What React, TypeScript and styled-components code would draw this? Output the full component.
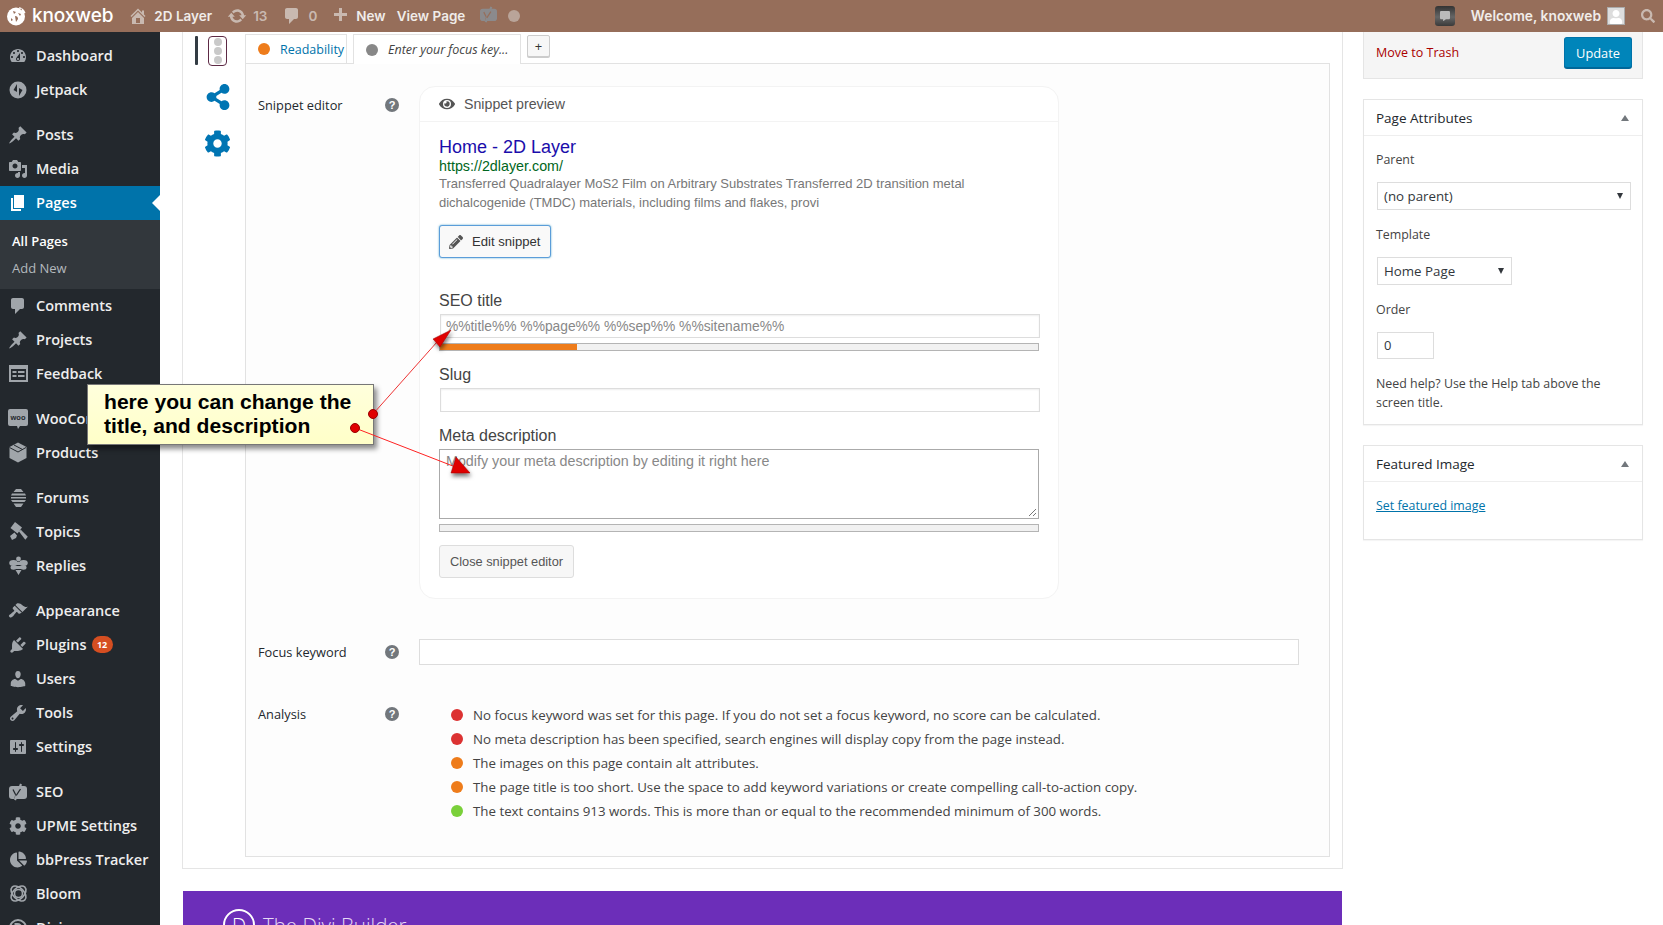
import React from "react";
import styled, { createGlobalStyle } from "styled-components";
import { FaCommentAlt, FaCog, FaChartPie, FaSearch, FaEye, FaPencilAlt, FaShareAlt, FaUser } from "react-icons/fa";

const Global = createGlobalStyle`
  html, body { margin: 0; padding: 0; height: 925px; overflow: hidden; background: #fff; }
  * { box-sizing: border-box; }
  #root { height: 925px; }
`;

const Page = styled.div`
  position: relative; width: 1663px; height: 925px; overflow: hidden;
  font-family: "Open Sans", sans-serif; color: #444;
`;

/* ---------- top bar ---------- */
const TopBar = styled.header`
  height: 32px; background: #966e5a; display: flex; align-items: center; justify-content: space-between;
  color: #eee; font-family: Inter, "Open Sans", sans-serif; font-weight: 600; font-size: 13.5px;
`;
const BarGroup = styled.div`display: flex; align-items: center;`;
const BarItem = styled.span<{ $ml: number; $dim?: boolean }>`
  display: inline-flex; align-items: center; margin-left: ${p => p.$ml}px; white-space: nowrap;
  color: ${p => (p.$dim ? "#c9b9b0" : "#f0ece9")};
  svg { display: block; }
`;
const Brand = styled.span`
  margin-left: 6px; font-size: 19px; font-weight: 500; color: #fff; letter-spacing: -0.1px; line-height: 32px;
`;
const Welcome = styled.span`font-size: 13.8px;`;
const BarYoast = styled.span`display: block; margin-left: 15px; color: #8b8a8c;`;
const NoteBox = styled.span`
  width: 20px; height: 20px; border-radius: 3px; background: linear-gradient(#333, #666 55%, #3a3a3a);
  display: flex; align-items: center; justify-content: center; color: #bbb;
`;
const Avatar = styled.span`
  width: 18px; height: 18px; background: #ddd; display: flex; align-items: flex-end; justify-content: center;
  border: 1px solid #aaa; color: #fff; overflow: hidden;
`;

/* ---------- shell ---------- */
const Shell = styled.div`display: flex; height: 893px;`;
const Sidebar = styled.nav`
  width: 160px; flex: none; background: #23282d; padding-top: 7px; overflow: hidden;
`;
const MenuItem = styled.div<{ $gap?: boolean; $active?: boolean }>`
  position: relative; height: 34px; display: flex; align-items: center; margin-top: ${p => (p.$gap ? 11 : 0)}px;
  padding-bottom: 1px;
  background: ${p => (p.$active ? "#0073aa" : "transparent")};
  color: ${p => (p.$active ? "#fff" : "#eee")}; font-size: 14.5px; font-weight: 600; white-space: nowrap;
`;
const MenuIcon = styled.span<{ $active?: boolean }>`
  width: 36px; flex: none; display: flex; justify-content: center;
  color: ${p => (p.$active ? "#fff" : "#a0a5aa")};
  svg { display: block; }
`;
const ActiveNotch = styled.span`
  position: absolute; right: 0; top: 9px; border: 8px solid transparent; border-right-color: #fff; border-left-width: 0;
`;
const Badge = styled.span`
  margin-left: 5px; width: 21px; height: 17px; border-radius: 9px; background: #d54e21; color: #fff;
  font-size: 9px; font-weight: 700; display: flex; align-items: center; justify-content: center;
`;
const Submenu = styled.div`
  height: 69px; background: #32373c; padding-top: 8px;
`;
const SubItem = styled.div<{ $on?: boolean }>`
  height: 26px; line-height: 26px; padding-left: 12px; font-size: 13px; margin-top: ${p => (p.$on ? 0 : 1)}px;
  color: ${p => (p.$on ? "#fff" : "#b4b9be")}; font-weight: ${p => (p.$on ? 600 : 400)};
`;

const Main = styled.main`
  flex: 1; display: flex; padding-left: 22px; align-items: flex-start;
`;

/* ---------- central meta box ---------- */
const MetaColumn = styled.div`width: 1161px; flex: none;`;
const MetaBox = styled.section`
  height: 837px; border: 1px solid #e5e5e5; border-top: 0; display: flex; background: #fff;
`;
const SideTabs = styled.div`
  width: 62px; flex: none; position: relative; padding-top: 4px; display: flex; flex-direction: column; align-items: center;
`;
const TrafficWrap = styled.div`
  width: 32px; height: 29px; display: flex; justify-content: space-between; margin-left: -6px;
`;
const TrafficBar = styled.span`width: 3px; height: 29px; background: #333c44; border-radius: 1px;`;
const TrafficLight = styled.span`
  width: 19px; height: 30px; border: 1px solid #5d2a45; border-radius: 4px; display: flex; flex-direction: column;
  align-items: center; justify-content: space-evenly; background: #fff;
`;
const TrafficDot = styled.span`width: 8px; height: 8px; border-radius: 50%; background: #c9c9c9;`;
const SideIcon = styled.span<{ $mt: number }>`
  margin-top: ${p => p.$mt}px; margin-left: 7px; color: #0075b3; display: block; svg { display: block; }
`;
const TabColumn = styled.div`flex: 1; padding-top: 2px; padding-right: 12px;`;
const TabRow = styled.div`display: flex; align-items: flex-start; height: 29px; position: relative; z-index: 1;`;
const Tab = styled.div<{ $active?: boolean; $w: number; $ml: number }>`
  width: ${p => p.$w}px; margin-left: ${p => p.$ml}px; height: 30px;
  border: 1px solid #e2e2e2; border-bottom: ${p => (p.$active ? "0" : "1px solid #e2e2e2")};
  background: #fff; display: flex; align-items: center; padding-left: 12px; font-size: 13px;
`;
const TabDot = styled.span<{ $c: string }>`
  width: 12px; height: 12px; border-radius: 50%; background: ${p => p.$c}; flex: none; margin-right: 10px;
`;
const TabLabel = styled.span<{ $focus?: boolean }>`
  color: ${p => (p.$focus ? "#444" : "#0073aa")}; font-style: ${p => (p.$focus ? "italic" : "normal")}; font-size: 12.5px; white-space: nowrap;
`;
const AddTab = styled.div`
  margin: 1px 0 0 6px; width: 23px; height: 22px; border: 1px solid #ccc; border-radius: 2px; box-shadow: 0 1px 0 #ccc;
  display: flex; align-items: center; justify-content: center; font-size: 13px; color: #333; background: #f7f7f7;
`;
const Panel = styled.div`
  height: 794px; border: 1px solid #e2e2e2; background: #fdfdfd; padding: 22px 0 0 12px;
`;
const FormRow = styled.div<{ $mt?: number }>`
  display: flex; align-items: flex-start; margin-top: ${p => p.$mt ?? 0}px;
`;
const FormLabel = styled.div<{ $top: number }>`
  width: 161px; flex: none; display: flex; justify-content: space-between; padding: ${p => p.$top}px 20px 0 0;
  font-size: 12.8px; line-height: 18px; color: #23282d;
`;
const Help = styled.span`
  width: 14px; height: 14px; margin-top: 2px; border-radius: 50%; background: #72777c; color: #fff;
  font: 700 11px/14px "Liberation Sans", sans-serif; text-align: center;
`;

/* ---------- snippet ---------- */
const Snippet = styled.div`
  width: 640px; height: 513px; border: 1px solid #f3f3f3; border-radius: 16px; background: #fff;
  font-family: "Liberation Sans", sans-serif;
`;
const SnippetHead = styled.div`
  height: 35px; border-bottom: 1px solid #f3f3f3; display: flex; align-items: center; padding-left: 19px;
  color: #555; font-size: 14.2px; gap: 9px;
`;
const SnippetBody = styled.div`padding: 15px 0 0 19px;`;
const GTitle = styled.div`font-size: 18px; line-height: 20px; color: #1a0dab;`;
const GUrl = styled.div`font-size: 14.3px; line-height: 18px; color: #006621;`;
const GDesc = styled.div`font-size: 13px; line-height: 19px; color: #777; margin-top: -1px; width: 540px;`;
const EditBtn = styled.div`
  width: 112px; height: 33px; margin-top: 13px; border: 1px solid #5b9dd9; border-radius: 3px; background: #f9f9f9;
  box-shadow: 0 0 2px rgba(30,140,190,.8); display: flex; align-items: center; padding-left: 9px; gap: 9px;
  font-size: 13.1px; color: #333;
`;
const FieldLabel = styled.div<{ $mt: number }>`
  font-size: 16px; line-height: 20px; color: #444; margin-top: ${p => p.$mt}px;
`;
const Field = styled.div<{ $mt: number }>`
  width: 600px; margin-left: 1px; height: 24px; margin-top: ${p => p.$mt}px; border: 1px solid #ddd; background: #fff; padding: 1px 0 0 5px;
  font-size: 13.8px; line-height: 21px; color: #888; box-shadow: inset 0 1px 2px rgba(0,0,0,.07);
`;
const TextArea = styled.div`
  position: relative; width: 600px; height: 70px; margin-top: 3px; border: 1px solid #aaa; background: #fff; padding: 2px 6px;
  font-size: 14.3px; line-height: 18px; color: #888;
`;
const Grip = styled.svg`position: absolute; right: 1px; bottom: 1px;`;
const Progress = styled.div<{ $mt: number }>`
  width: 600px; height: 8px; margin-top: ${p => p.$mt}px; border: 1px solid #b4b4b4; background: #f1f1f1;
`;
const ProgressFill = styled.div`height: 100%; background: #ee7c1b;`;
const CloseBtn = styled.div`
  width: 135px; height: 33px; margin-top: 13px; border: 1px solid #ddd; border-radius: 3px; background: #f7f7f7;
  display: flex; align-items: center; justify-content: center; font-size: 12.8px; color: #555;
`;
const KeywordInput = styled.div`
  width: 880px; height: 26px; border: 1px solid #ddd; background: #fff;
`;
const Results = styled.ul`
  list-style: none; margin: 0; padding: 0 0 0 32px; font-size: 13.3px; color: #444;
`;
const Result = styled.li`
  height: 24px; display: flex; align-items: center; white-space: nowrap;
`;
const ResultDot = styled.span<{ $c: string }>`
  width: 12px; height: 12px; border-radius: 50%; background: ${p => p.$c}; margin-right: 10px; flex: none;
`;
const Divi = styled.div`
  margin: 22px 1px 0; height: 60px; background: #6c2eb9; padding: 18px 0 0 40px; display: flex; gap: 8px; color: #e6d9f5;
  font-size: 20.5px; font-weight: 300; line-height: 32px;
`;
const DiviMark = styled.span`
  width: 32px; height: 32px; border: 2px solid #fff; border-radius: 50%; color: #fff; text-align: center; font-size: 20px; line-height: 30px;
`;

/* ---------- right column ---------- */
const RightColumn = styled.aside`width: 280px; flex: none; margin-left: 20px;`;
const PublishBar = styled.div`
  height: 47px; background: #f5f5f5; border: 1px solid #e5e5e5; border-top: 0; display: flex; align-items: flex-start;
  justify-content: space-between; padding: 5px 10px 0 12px; font-size: 12.5px;
`;
const Trash = styled.span`color: #a00; margin-top: 7px;`;
const UpdateBtn = styled.span`
  width: 68px; height: 31px; background: #0085ba; border: 1px solid #0073aa; border-bottom-color: #006799; border-radius: 3px;
  color: #fff; display: flex; align-items: center; justify-content: center; box-shadow: 0 1px 0 #006799; font-size: 12.8px;
`;
const Box = styled.section<{ $h: number; $mt: number }>`
  height: ${p => p.$h}px; margin-top: ${p => p.$mt}px; background: #fff; border: 1px solid #e5e5e5; box-shadow: 0 1px 1px rgba(0,0,0,.04);
`;
const BoxHead = styled.div`
  height: 36px; border-bottom: 1px solid #eee; display: flex; align-items: center; justify-content: space-between;
  padding: 0 13px 0 12px; font-size: 13.5px; color: #23282d;
`;
const Collapse = styled.span`
  border: 4px solid transparent; border-bottom: 6px solid #72777c; border-top: 0; width: 0; height: 0;
`;
const BoxBody = styled.div`padding: 0 12px; font-size: 12.4px;`;
const AttrLabel = styled.div<{ $mt: number }>`
  margin-top: ${p => p.$mt}px; line-height: 18px; color: #444;
`;
const SelectBox = styled.div<{ $w: number; $mt: number }>`
  width: ${p => p.$w}px; height: 28px; margin: ${p => p.$mt}px 0 0 1px; border: 1px solid #ddd; display: flex; align-items: center;
  justify-content: space-between; padding: 0 7px 0 6px; color: #32373c; font-size: 13.3px;
`;
const SelectCaret = styled.span`border: 3.5px solid transparent; border-top: 6px solid #32373c; border-bottom: 0;`;
const OrderInput = styled.div`
  width: 57px; height: 27px; margin: 13px 0 0 1px; border: 1px solid #ddd; padding: 0 6px; line-height: 25px; color: #32373c; font-size: 13px;
`;
const HelpText = styled.p`margin: 15px 0 0; line-height: 19px; color: #444; width: 250px;`;
const BoxLink = styled.span`
  display: block; margin-top: 15px; color: #0073aa; text-decoration: underline; line-height: 18px;
`;

/* ---------- annotation overlay ---------- */
const Callout = styled.div`
  position: absolute; left: 87px; top: 384px; width: 287px; height: 61px; border: 1px solid #777;
  background: linear-gradient(#ffffdc, #ffffc8); box-shadow: 3px 4px 5px rgba(0,0,0,.45);
  padding: 5px 0 0 16px; font: 700 21.1px/24px "Liberation Sans", sans-serif; color: #000;
`;
const Arrows = styled.svg`position: absolute; inset: 0; pointer-events: none;`;

/* ---------- hand-drawn icons ---------- */
const Dash = ({ d, size = 20 }: { d: string; size?: number }) => (
  <svg width={size} height={size} viewBox="0 0 20 20" fill="currentColor"><path d={d} /></svg>
);
const D = {
  dashboard: "M3.76 16h12.48c1.1-1.37 1.76-3.11 1.76-5 0-4.42-3.58-8-8-8s-8 3.58-8 8c0 1.89.66 3.63 1.76 5zM10 4c.55 0 1 .45 1 1s-.45 1-1 1-1-.45-1-1 .45-1 1-1zM6 6c.55 0 1 .45 1 1s-.45 1-1 1-1-.45-1-1 .45-1 1-1zm8 0c.55 0 1 .45 1 1s-.45 1-1 1-1-.45-1-1 .45-1 1-1zm-5.37 5.55L12 7v6c0 1.1-.9 2-2 2s-2-.9-2-2c0-.57.24-1.08.63-1.45zM4 10c.55 0 1 .45 1 1s-.45 1-1 1-1-.45-1-1 .45-1 1-1zm12 0c.55 0 1 .45 1 1s-.45 1-1 1-1-.45-1-1 .45-1 1-1zm-5 3c0-.55-.45-1-1-1s-1 .45-1 1 .45 1 1 1 1-.45 1-1z",
  pin: "M10.44 3.02l1.82-1.82 6.36 6.35-1.83 1.82c-1.05-.68-2.48-.57-3.41.36l-.75.75c-.92.93-1.04 2.35-.35 3.41l-1.83 1.82-2.41-2.41-2.8 2.79c-.42.42-3.38 2.71-3.8 2.29s1.86-3.39 2.28-3.81l2.79-2.79L4.1 9.36l1.83-1.82c1.05.69 2.48.57 3.4-.36l.75-.75c.93-.92 1.05-2.35.36-3.41z",
  media: "M13 11V4c0-.55-.45-1-1-1h-1.67L9 1H5L3.67 3H2c-.55 0-1 .45-1 1v7c0 .55.45 1 1 1h10c.55 0 1-.45 1-1zM7 4.5c1.38 0 2.5 1.12 2.5 2.5S8.38 9.5 7 9.5 4.5 8.38 4.5 7 5.62 4.5 7 4.5zM14 6h5v10.5c0 1.38-1.12 2.5-2.5 2.5S14 17.88 14 16.5s1.12-2.5 2.5-2.5c.17 0 .34.02.5.05V9h-3V6zm-4 8.05V13h2v3.5c0 1.38-1.12 2.5-2.5 2.5S7 17.88 7 16.5 8.12 14 9.5 14c.17 0 .34.02.5.05z",
  page: "M6 15V2h10v13H6zm-1 1h8v2H3V5h2v11z",
  comment: "M5 2h9c1.1 0 2 .9 2 2v7c0 1.1-.9 2-2 2h-2l-5 5v-5H5c-1.1 0-2-.9-2-2V4c0-1.1.9-2 2-2z",
  users: "M10 9.25c-2.27 0-2.73-3.44-2.73-3.44C7 4.02 7.82 2 9.97 2c2.16 0 2.98 2.02 2.71 3.81 0 0-.41 3.44-2.68 3.44zm0 2.57L12.72 10c2.39 0 4.52 2.33 4.52 4.53v2.49s-3.65 1.13-7.24 1.13c-3.65 0-7.24-1.13-7.24-1.13v-2.49c0-2.25 1.94-4.48 4.47-4.48z",
  tools: "M16.68 9.77c-1.34 1.34-3.3 1.67-4.95.99l-5.41 6.52c-.99.99-2.59.99-3.58 0s-.99-2.59 0-3.57l6.52-5.42c-.68-1.65-.35-3.61.99-4.95 1.28-1.28 3.12-1.62 4.72-1.06l-2.89 2.89 2.82 2.82 2.86-2.87c.53 1.58.18 3.39-1.08 4.67zM3.81 16.21c.4.39 1.04.39 1.43 0 .4-.4.4-1.04 0-1.43-.39-.4-1.03-.4-1.43 0-.39.39-.39 1.03 0 1.43z",
  appearance: "M14.48 11.06L7.41 3.99l1.5-1.5c.5-.56 2.3-.47 3.51.32 1.21.8 1.43 1.28 2.91 2.1 1.18.64 2.45 1.26 4.45.85zm-.71.71L6.7 4.7 4.93 6.47c-.39.39-.39 1.02 0 1.41l1.06 1.06c.39.39.39 1.03 0 1.42-.6.6-1.43 1.11-2.21 1.69-.35.26-.7.53-1.01.84C1.43 13.23.4 14.91 1.09 15.6l.71.71c.69.69 2.37-.34 3.72-1.68.31-.31.58-.66.84-1.01.58-.78 1.09-1.61 1.69-2.21.39-.39 1.03-.39 1.42 0l1.06 1.06c.39.39 1.02.39 1.41 0z",
  plugins: "M13.11 4.36L9.87 7.6 8 5.73l3.24-3.24c.35-.34 1.05-.2 1.56.32.52.51.66 1.21.31 1.55zm-8 1.77l.91-1.12 9.01 9.01-1.19.84c-.71.71-2.63 1.16-3.82 1.16H6.14L4.9 17.26c-.59.59-1.54.59-2.12 0-.59-.58-.59-1.53 0-2.12l1.24-1.24v-3.88c0-1.13.4-3.19 1.09-3.89zm7.26 3.97l3.24-3.24c.34-.35 1.04-.21 1.55.31.52.51.66 1.21.31 1.55l-3.24 3.25z",
  settings: "M18 16V4c0-.55-.45-1-1-1H3c-.55 0-1 .45-1 1v12c0 .55.45 1 1 1h14c.55 0 1-.45 1-1zM8 11h1c.55 0 1 .45 1 1s-.45 1-1 1H8v1.5c0 .28-.22.5-.5.5s-.5-.22-.5-.5V13H6c-.55 0-1-.45-1-1s.45-1 1-1h1V5.5c0-.28.22-.5.5-.5s.5.22.5.5V11zm5-2h-1c-.55 0-1-.45-1-1s.45-1 1-1h1V5.5c0-.28.22-.5.5-.5s.5.22.5.5V7h1c.55 0 1 .45 1 1s-.45 1-1 1h-1v5.5c0 .28-.22.5-.5.5s-.5-.22-.5-.5V9z",
  home: "M16 8.5l1.53 1.53-1.06 1.06L10 4.62l-6.47 6.47-1.06-1.06L10 2.5l4 4v-2h2v4zm-6-2.46l6 5.99V18H4v-5.97zM12 17v-5H8v5h4z",
  update: "M10.2 3.28c3.53 0 6.43 2.61 6.92 6h2.08l-3.5 4-3.5-4h2.32c-.45-1.97-2.21-3.45-4.32-3.45-1.45 0-2.73.71-3.54 1.78L4.95 5.66C6.23 4.2 8.11 3.28 10.2 3.28zm-.4 13.44c-3.52 0-6.43-2.61-6.92-6H.8l3.5-4c1.17 1.33 2.33 2.67 3.5 4H5.48c.45 1.97 2.21 3.45 4.32 3.45 1.45 0 2.73-.71 3.54-1.78l1.71 1.95c-1.28 1.46-3.15 2.38-5.25 2.38z",
  plus: "M17 7v3h-5v5H9v-5H4V7h5V2h3v5h5z",
};
const Jetpack = () => (
  <svg width="18" height="18" viewBox="0 0 18 18"><circle cx="9" cy="9" r="8.5" fill="currentColor" /><path d="M8 3v8L4.5 9zM10 15V7l3.5 2z" fill="#23282d" /></svg>
);
const FeedbackIco = () => (
  <svg width="19" height="17" viewBox="0 0 19 17" fill="currentColor"><path d="M0 0h19v17H0zM2 4v11h15V4z" fillRule="evenodd" /><path d="M3.5 6h4v2h-4zM9 6h6.5v2H9zM3.5 10h4v2h-4zM9 10h6.5v2H9z" /></svg>
);
const WooIco = () => (
  <svg width="20" height="21" viewBox="0 0 20 21"><path d="M2 1h16a2 2 0 012 2v13a2 2 0 01-2 2h-6l-2 3-1-3H2a2 2 0 01-2-2V3a2 2 0 012-2z" fill="currentColor" /><text x="10" y="12" textAnchor="middle" fontSize="7.5" fontFamily="Liberation Sans, sans-serif" fill="#23282d">woo</text></svg>
);
const ProductsIco = () => (
  <svg width="20" height="21" viewBox="0 0 20 21"><path d="M10 .5l8.5 4.5v11l-8.5 4.5L1.5 16V5z" fill="currentColor" /><path d="M1.5 5.5L10 10l8-4.5M6 3l8.5 4.5" fill="none" stroke="#23282d" strokeWidth="1" /></svg>
);
const ForumsIco = () => (
  <svg width="15" height="18" viewBox="0 0 15 18" fill="currentColor"><path d="M5 0h5l2.5 3h-10zM1 4.5h13l1 2H0zM0 8h15v1.5H0zM0 11h15l-1.5 2h-12zM2.5 14.5h10L10 18H5z" /></svg>
);
const TopicsIco = () => (
  <svg width="19" height="19" viewBox="0 0 19 19" fill="currentColor"><path d="M6 0l7 5.5-4.500 6L1.500 6zM10 9.500l1.800-1.800 7 7-2.500 3zM1 14l4.500-3.500 2.500 3-1 2.500-4 2z" /></svg>
);
const BeeIco = () => (
  <svg width="19" height="19" viewBox="0 0 19 19" fill="currentColor"><circle cx="9.5" cy="3" r="2.4" /><ellipse cx="4.5" cy="7" rx="4.3" ry="3" /><ellipse cx="14.5" cy="7" rx="4.3" ry="3" /><ellipse cx="4.5" cy="11.5" rx="3" ry="2.2" /><ellipse cx="14.5" cy="11.5" rx="3" ry="2.2" /><path d="M6 6h7l1 3H5zM5 10h9l-1 3H6zM6.5 14h6L9.5 19z" /></svg>
);
const YoastIco = ({ size = 18, ink = "#23282d" }: { size?: number; ink?: string }) => (
  <svg width={size} height={size} viewBox="0 0 18 18"><path d="M3 3h12a3 3 0 013 3v7a3 3 0 01-3 3H3a3 3 0 01-3-3V6a3 3 0 013-3z" fill="currentColor" /><path d="M4 6.5l2.8 5.5-.8 3.8" fill="none" stroke={ink} strokeWidth="1.3" /><path d="M6 17l6-16" fill="none" stroke="currentColor" strokeWidth="2.2" /><path d="M7.2 12.5L11.5 6" fill="none" stroke={ink} strokeWidth="1.3" /></svg>
);
const BloomIco = () => (
  <svg width="19" height="19" viewBox="0 0 19 19" fill="none" stroke="currentColor" strokeWidth="1.6"><circle cx="9.5" cy="9.5" r="4" /><ellipse cx="9.5" cy="9.5" rx="9" ry="5.5" transform="rotate(45 9.5 9.5)" /><ellipse cx="9.5" cy="9.5" rx="9" ry="5.5" transform="rotate(-45 9.5 9.5)" /></svg>
);
const DiviIco = () => (
  <svg width="18" height="18" viewBox="0 0 18 18" fill="none" stroke="currentColor" strokeWidth="2"><circle cx="9" cy="9" r="8" /><path d="M6.5 5v8h2a4 4 0 000-8z" /></svg>
);
const Logo = () => (
  <svg width="19" height="20" viewBox="0 0 19 20"><circle cx="9" cy="10.5" r="9" fill="#fff" /><path d="M12 1c3 .5 5.5 3 6.500 6l-4 1z" fill="#fff" /><path d="M6 5l3 1-2 2zM11 7l3 1-1 2zM4 12l2 2-2 1zM13 3l1.500-.5.500 2z M8 10c2 0 3 1 3 3l-2 3z" fill="#966e5a" /></svg>
);
const TrafficIcon = () => (
  <svg width="12" height="12"><circle cx="6" cy="6" r="6" fill="#b9a499" /></svg>
);
const Pin = <Dash d={D.pin} />;

type Item = { label: string; icon: React.ReactNode; gap?: boolean; active?: boolean; badge?: string };
const menu: (Item | "sub")[] = [
  { label: "Dashboard", icon: <Dash d={D.dashboard} /> },
  { label: "Jetpack", icon: <Jetpack /> },
  { label: "Posts", icon: Pin, gap: true },
  { label: "Media", icon: <Dash d={D.media} /> },
  { label: "Pages", icon: <Dash d={D.page} />, active: true },
  "sub",
  { label: "Comments", icon: <Dash d={D.comment} /> },
  { label: "Projects", icon: Pin },
  { label: "Feedback", icon: <FeedbackIco /> },
  { label: "WooCommerce", icon: <WooIco />, gap: true },
  { label: "Products", icon: <ProductsIco /> },
  { label: "Forums", icon: <ForumsIco />, gap: true },
  { label: "Topics", icon: <TopicsIco /> },
  { label: "Replies", icon: <BeeIco /> },
  { label: "Appearance", icon: <Dash d={D.appearance} />, gap: true },
  { label: "Plugins", icon: <Dash d={D.plugins} />, badge: "12" },
  { label: "Users", icon: <Dash d={D.users} /> },
  { label: "Tools", icon: <Dash d={D.tools} /> },
  { label: "Settings", icon: <Dash d={D.settings} /> },
  { label: "SEO", icon: <YoastIco />, gap: true },
  { label: "UPME Settings", icon: <FaCog size={18} /> },
  { label: "bbPress Tracker", icon: <FaChartPie size={17} /> },
  { label: "Bloom", icon: <BloomIco /> },
  { label: "Divi", icon: <DiviIco /> },
];

const results = [
  ["#dc3232", "No focus keyword was set for this page. If you do not set a focus keyword, no score can be calculated."],
  ["#dc3232", "No meta description has been specified, search engines will display copy from the page instead."],
  ["#ee7c1b", "The images on this page contain alt attributes."],
  ["#ee7c1b", "The page title is too short. Use the space to add keyword variations or create compelling call-to-action copy."],
  ["#7ad03a", "The text contains 913 words. This is more than or equal to the recommended minimum of 300 words."],
];

export default function App() {
  return (
    <Page>
      <Global />
      <TopBar>
        <BarGroup>
          <BarItem $ml={7}><Logo /><Brand>knoxweb</Brand></BarItem>
          <BarItem $ml={15} $dim><Dash d={D.home} size={20} /></BarItem>
          <BarItem $ml={6}>2D Layer</BarItem>
          <BarItem $ml={15} $dim><Dash d={D.update} size={20} /></BarItem>
          <BarItem $ml={6} $dim>13</BarItem>
          <BarItem $ml={15} $dim><Dash d={D.comment} size={20} /></BarItem>
          <BarItem $ml={6} $dim>0</BarItem>
          <BarItem $ml={13} $dim><Dash d={D.plus} size={20} /></BarItem>
          <BarItem $ml={6}>New</BarItem>
          <BarItem $ml={11}>View Page</BarItem>
          <BarYoast><YoastIco size={17} ink="#966e5a" /></BarYoast>
          <BarItem $ml={11} $dim><TrafficIcon /></BarItem>
        </BarGroup>
        <BarGroup>
          <NoteBox><FaCommentAlt size={10} /></NoteBox>
          <BarItem $ml={16}><Welcome>Welcome, knoxweb</Welcome></BarItem>
          <BarItem $ml={6}><Avatar><FaUser size={14} /></Avatar></BarItem>
          <BarItem $ml={16} $dim><FaSearch size={14} /></BarItem>
          <BarItem $ml={8}><span /></BarItem>
        </BarGroup>
      </TopBar>
      <Shell>
        <Sidebar>
          {menu.map((m, i) =>
            m === "sub" ? (
              <Submenu key={i}>
                <SubItem $on>All Pages</SubItem>
                <SubItem>Add New</SubItem>
              </Submenu>
            ) : (
              <MenuItem key={i} $gap={m.gap} $active={m.active}>
                <MenuIcon $active={m.active}>{m.icon}</MenuIcon>
                {m.label}
                {m.badge && <Badge>{m.badge}</Badge>}
                {m.active && <ActiveNotch />}
              </MenuItem>
            ),
          )}
        </Sidebar>
        <Main>
          <MetaColumn>
            <MetaBox>
              <SideTabs>
                <TrafficWrap>
                  <TrafficBar />
                  <TrafficLight><TrafficDot /><TrafficDot /><TrafficDot /></TrafficLight>
                </TrafficWrap>
                <SideIcon $mt={19}><FaShareAlt size={26} /></SideIcon>
                <SideIcon $mt={20}><FaCog size={27} /></SideIcon>
              </SideTabs>
              <TabColumn>
                <TabRow>
                  <Tab $w={102} $ml={0}><TabDot $c="#ee7c1b" /><TabLabel>Readability</TabLabel></Tab>
                  <Tab $w={168} $ml={6} $active><TabDot $c="#888" /><TabLabel $focus>Enter your focus key...</TabLabel></Tab>
                  <AddTab>+</AddTab>
                </TabRow>
                <Panel>
                  <FormRow>
                    <FormLabel $top={10}>Snippet editor<Help>?</Help></FormLabel>
                    <Snippet>
                      <SnippetHead><FaEye size={16} color="#555" />Snippet preview</SnippetHead>
                      <SnippetBody>
                        <GTitle>Home - 2D Layer</GTitle>
                        <GUrl>https://2dlayer.com/</GUrl>
                        <GDesc>Transferred Quadralayer MoS2 Film on Arbitrary Substrates Transferred 2D transition metal dichalcogenide (TMDC) materials, including films and flakes, provi</GDesc>
                        <EditBtn><FaPencilAlt size={14} color="#555" />Edit snippet</EditBtn>
                        <FieldLabel $mt={33}>SEO title</FieldLabel>
                        <Field $mt={3}>%%title%% %%page%% %%sep%% %%sitename%%</Field>
                        <Progress $mt={5}><ProgressFill style={{ width: `${(137 / 600) * 100}%` }} /></Progress>
                        <FieldLabel $mt={14}>Slug</FieldLabel>
                        <Field $mt={3} />
                        <FieldLabel $mt={14}>Meta description</FieldLabel>
                        <TextArea>
                          Modify your meta description by editing it right here
                          <Grip width="9" height="9" viewBox="0 0 9 9"><path d="M1 8l7-7M5 8l3-3" stroke="#777" strokeWidth="1" /></Grip>
                        </TextArea>
                        <Progress $mt={5} />
                        <CloseBtn>Close snippet editor</CloseBtn>
                      </SnippetBody>
                    </Snippet>
                  </FormRow>
                  <FormRow $mt={40}>
                    <FormLabel $top={4}>Focus keyword<Help>?</Help></FormLabel>
                    <KeywordInput />
                  </FormRow>
                  <FormRow $mt={38}>
                    <FormLabel $top={2}>Analysis<Help>?</Help></FormLabel>
                    <Results>
                      {results.map(([c, t]) => (
                        <Result key={t}><ResultDot $c={c} />{t}</Result>
                      ))}
                    </Results>
                  </FormRow>
                </Panel>
              </TabColumn>
            </MetaBox>
            <Divi><DiviMark>D</DiviMark>The Divi Builder</Divi>
          </MetaColumn>
          <RightColumn>
            <PublishBar><Trash>Move to Trash</Trash><UpdateBtn>Update</UpdateBtn></PublishBar>
            <Box $h={326} $mt={20}>
              <BoxHead>Page Attributes<Collapse /></BoxHead>
              <BoxBody>
                <AttrLabel $mt={15}>Parent</AttrLabel>
                <SelectBox $w={254} $mt={13}>(no parent)<SelectCaret /></SelectBox>
                <AttrLabel $mt={16}>Template</AttrLabel>
                <SelectBox $w={135} $mt={13}>Home Page<SelectCaret /></SelectBox>
                <AttrLabel $mt={16}>Order</AttrLabel>
                <OrderInput>0</OrderInput>
                <HelpText>Need help? Use the Help tab above the screen title.</HelpText>
              </BoxBody>
            </Box>
            <Box $h={95} $mt={20}>
              <BoxHead>Featured Image<Collapse /></BoxHead>
              <BoxBody><BoxLink>Set featured image</BoxLink></BoxBody>
            </Box>
          </RightColumn>
        </Main>
      </Shell>
      <Callout>here you can change the<br />title, and description</Callout>
      <Arrows width="1663" height="925" viewBox="0 0 1663 925">
        <defs>
          <filter id="s" x="-50%" y="-50%" width="200%" height="200%"><feDropShadow dx="1" dy="3" stdDeviation="2" floodColor="#000" floodOpacity=".55" /></filter>
        </defs>
        <line x1="373" y1="414" x2="437" y2="342" stroke="#e33" strokeWidth="1" />
        <polygon points="451,330 433,339 440,347" fill="#e00000" stroke="#900" strokeWidth=".5" filter="url(#s)" />
        <line x1="355" y1="428" x2="458" y2="468" stroke="#f22" strokeWidth="1" />
        <polygon points="470,473 451,473 456,457" fill="#e00000" stroke="#900" strokeWidth=".5" filter="url(#s)" />
        <circle cx="373" cy="414" r="4.5" fill="#e00000" stroke="#900" />
        <circle cx="355" cy="428" r="4.5" fill="#e00000" stroke="#900" />
      </Arrows>
    </Page>
  );
}
